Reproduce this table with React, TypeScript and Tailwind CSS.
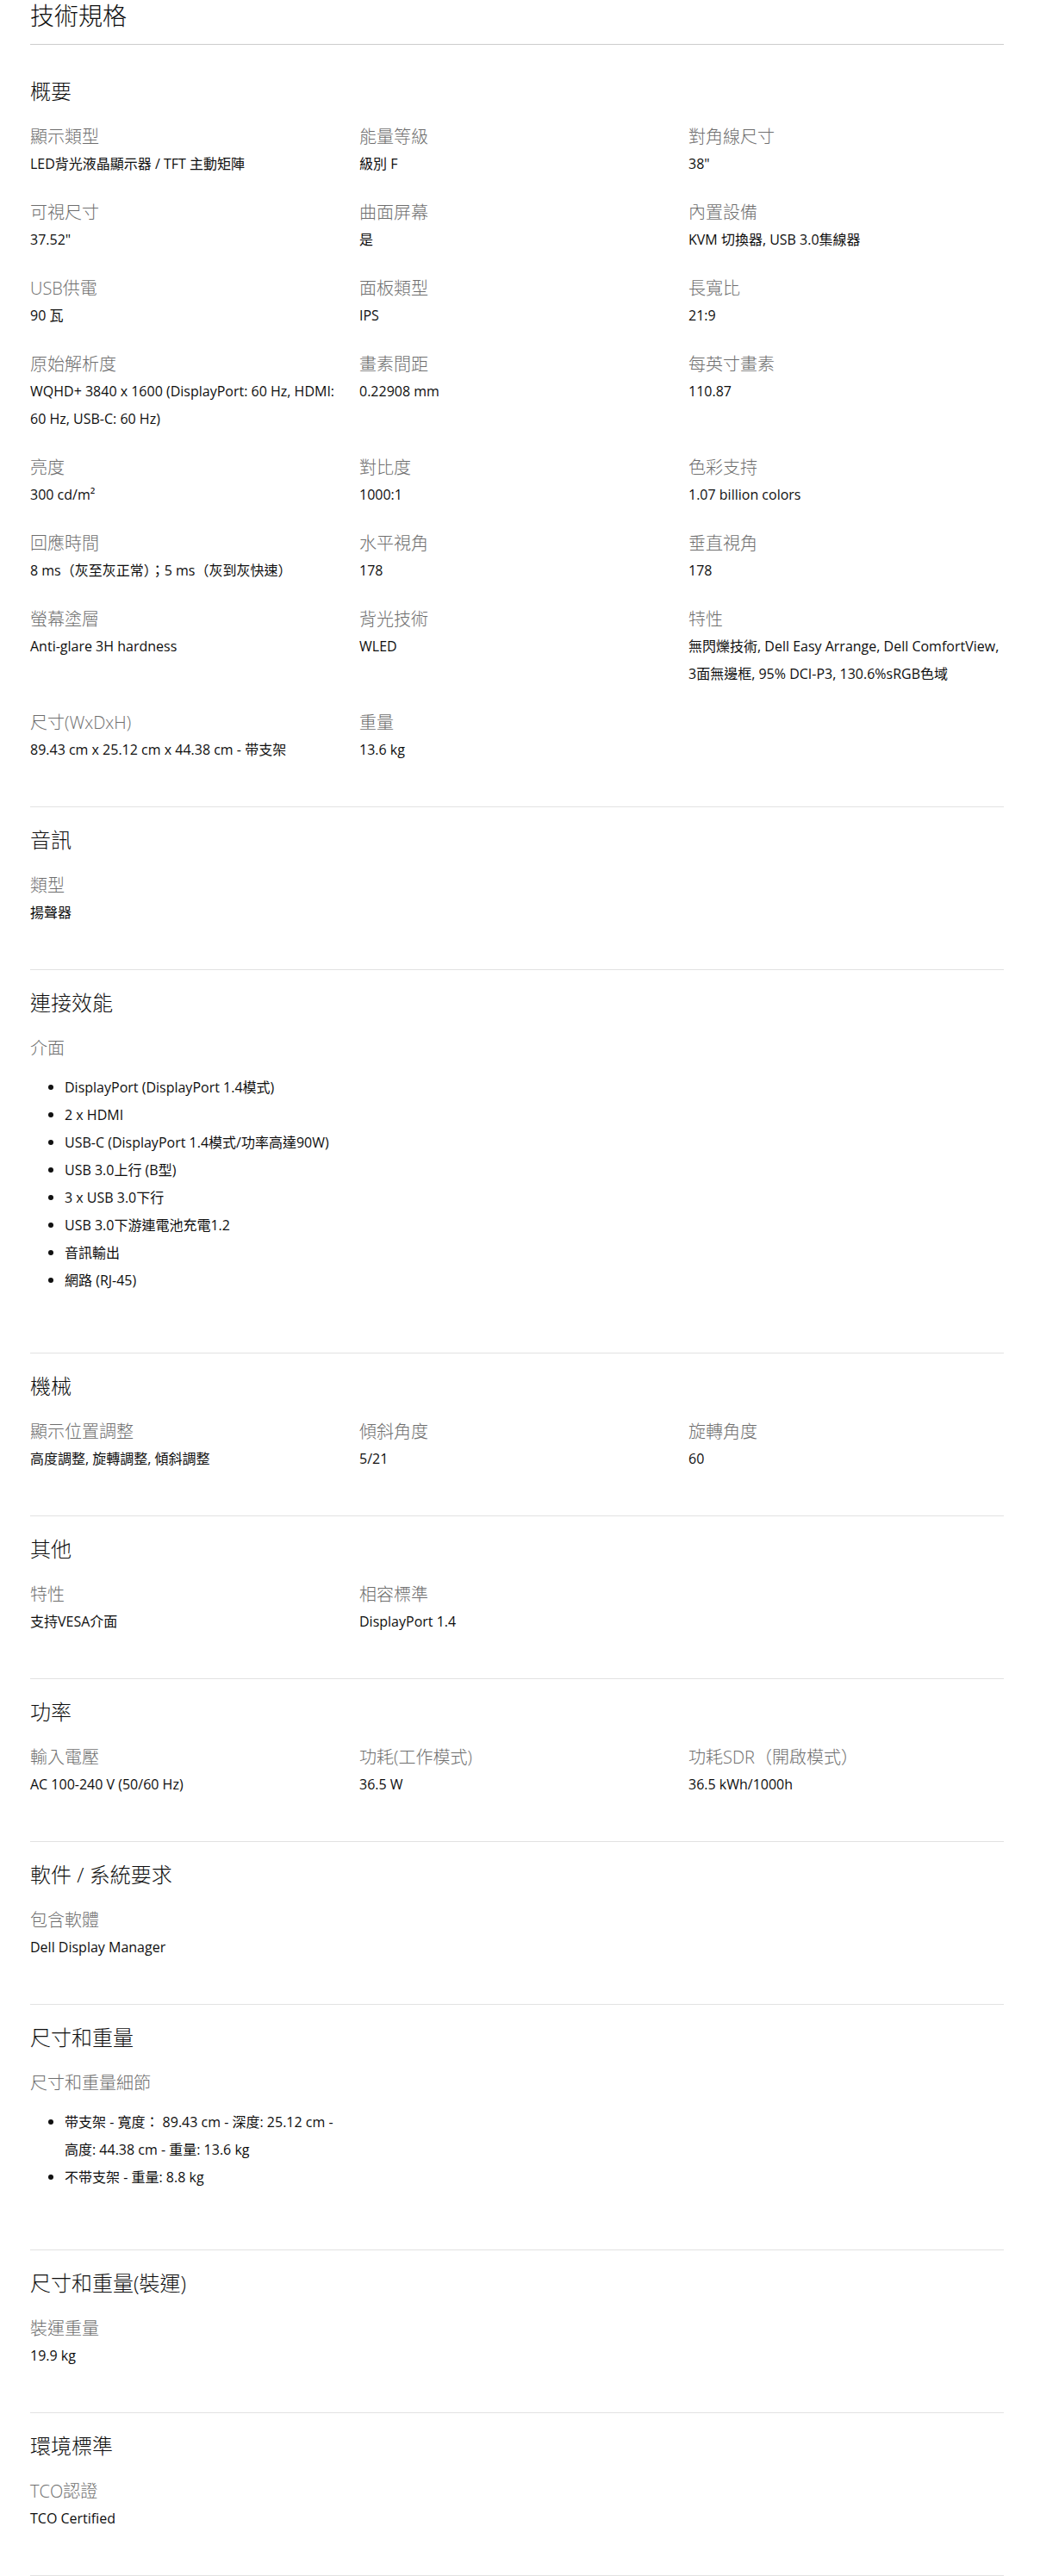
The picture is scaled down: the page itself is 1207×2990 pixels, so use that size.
import React from "react";

type Item = { label: string; value?: string; list?: string[]; wide?: boolean };
type Section = { title: string; items: Item[] };

const sections: Section[] = [
  {
    title: "概要",
    items: [
      { label: "顯示類型", value: "LED背光液晶顯示器 / TFT 主動矩陣" },
      { label: "能量等級", value: "級別 F" },
      { label: "對角線尺寸", value: "38\"" },
      { label: "可視尺寸", value: "37.52\"" },
      { label: "曲面屏幕", value: "是" },
      { label: "內置設備", value: "KVM 切換器, USB 3.0集線器" },
      { label: "USB供電", value: "90 瓦" },
      { label: "面板類型", value: "IPS" },
      { label: "長寬比", value: "21:9" },
      { label: "原始解析度", value: "WQHD+ 3840 x 1600 (DisplayPort: 60 Hz, HDMI: 60 Hz, USB-C: 60 Hz)" },
      { label: "畫素間距", value: "0.22908 mm" },
      { label: "每英寸畫素", value: "110.87" },
      { label: "亮度", value: "300 cd/m²" },
      { label: "對比度", value: "1000:1" },
      { label: "色彩支持", value: "1.07 billion colors" },
      { label: "回應時間", value: "8 ms（灰至灰正常）；5 ms（灰到灰快速）" },
      { label: "水平視角", value: "178" },
      { label: "垂直視角", value: "178" },
      { label: "螢幕塗層", value: "Anti-glare 3H hardness" },
      { label: "背光技術", value: "WLED" },
      { label: "特性", value: "無閃爍技術, Dell Easy Arrange, Dell ComfortView, 3面無邊框, 95% DCI-P3, 130.6%sRGB色域" },
      { label: "尺寸(WxDxH)", value: "89.43 cm x 25.12 cm x 44.38 cm - 带支架" },
      { label: "重量", value: "13.6 kg" },
    ],
  },
  { title: "音訊", items: [{ label: "類型", value: "揚聲器" }] },
  {
    title: "連接效能",
    items: [
      {
        label: "介面",
        wide: true,
        list: [
          "DisplayPort (DisplayPort 1.4模式)",
          "2 x HDMI",
          "USB-C (DisplayPort 1.4模式/功率高達90W)",
          "USB 3.0上行 (B型)",
          "3 x USB 3.0下行",
          "USB 3.0下游連電池充電1.2",
          "音訊輸出",
          "網路 (RJ-45)",
        ],
      },
    ],
  },
  {
    title: "機械",
    items: [
      { label: "顯示位置調整", value: "高度調整, 旋轉調整, 傾斜調整" },
      { label: "傾斜角度", value: "5/21" },
      { label: "旋轉角度", value: "60" },
    ],
  },
  {
    title: "其他",
    items: [
      { label: "特性", value: "支持VESA介面" },
      { label: "相容標準", value: "DisplayPort 1.4" },
    ],
  },
  {
    title: "功率",
    items: [
      { label: "輸入電壓", value: "AC 100-240 V (50/60 Hz)" },
      { label: "功耗(工作模式)", value: "36.5 W" },
      { label: "功耗SDR（開啟模式）", value: "36.5 kWh/1000h" },
    ],
  },
  { title: "軟件 / 系統要求", items: [{ label: "包含軟體", value: "Dell Display Manager" }] },
  {
    title: "尺寸和重量",
    items: [
      {
        label: "尺寸和重量細節",
        list: [
          "带支架 - 寬度： 89.43 cm - 深度: 25.12 cm - 高度: 44.38 cm - 重量: 13.6 kg",
          "不带支架 - 重量: 8.8 kg",
        ],
      },
    ],
  },
  { title: "尺寸和重量(裝運)", items: [{ label: "裝運重量", value: "19.9 kg" }] },
  { title: "環境標準", items: [{ label: "TCO認證", value: "TCO Certified" }] },
];

function SpecItem({ item }: { item: Item }) {
  return (
    <div className={item.wide ? "col-span-3 mb-[26px]" : "mb-[26px]"}>
      <div className="text-[20px] leading-[30px] font-light text-[#6e6e6e]">{item.label}</div>
      {item.value !== undefined && (
        <div className="text-[16px] leading-[32px] font-normal text-[#0e0e0e]">{item.value}</div>
      )}
      {item.list && (
        <ul className="mt-[14px] mb-[18px] pl-[21px]">
          {item.list.map((li) => (
            <li key={li} className="flex text-[16px] leading-[32px] text-[#0e0e0e]">
              <span className="mt-[13px] mr-[13px] h-[6px] w-[6px] shrink-0 rounded-full bg-[#111]" />
              <span>{li}</span>
            </li>
          ))}
        </ul>
      )}
    </div>
  );
}

export default function App() {
  return (
    <div className="min-h-[2990px] w-full bg-white font-['Open_Sans','Noto_Sans_CJK_TC',sans-serif] antialiased">
      <div className="ml-[35px] w-[1130px]">
        <div className="border-b border-[#cccccc] pb-[15px]">
          <h1 className="text-[28px] leading-[36px] font-light text-[#0e0e0e]">技術規格</h1>
        </div>
        {sections.map((s, i) => (
          <section
            key={s.title}
            className={
              i === 0
                ? "border-b border-[#e2e2e2] pt-[36px] pb-[24px]"
                : "border-b border-[#e2e2e2] pt-[20px] pb-[24px]"
            }
          >
            <h2 className="mb-[20px] text-[24px] leading-[36px] font-light text-[#0e0e0e]">{s.title}</h2>
            <div className="grid grid-cols-3 gap-x-[16px]">
              {s.items.map((it) => (
                <SpecItem key={it.label} item={it} />
              ))}
            </div>
          </section>
        ))}
      </div>
    </div>
  );
}
